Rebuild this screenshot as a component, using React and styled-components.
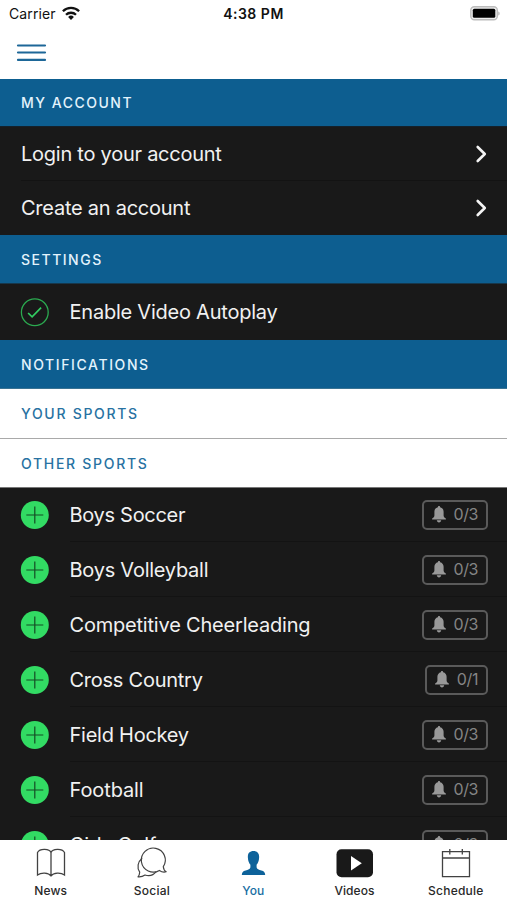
import React from "react";
import styled, { createGlobalStyle } from "styled-components";

const GlobalStyle = createGlobalStyle`
  * { box-sizing: border-box; }
  body { margin: 0; background: #fff; font-family: Inter, "Liberation Sans", sans-serif; }
`;

const Screen = styled.div`
  width: 507px;
  height: 900px;
  display: flex;
  flex-direction: column;
  overflow: hidden;
  background: #fff;
`;

const StatusBar = styled.header`
  height: 27px;
  flex: none;
  display: grid;
  grid-template-columns: 1fr auto 1fr;
  align-items: center;
  padding: 0 7px 0 9px;
  color: #111;
  font-size: 14px;
  line-height: 27px;
`;

const Carrier = styled.div`
  display: flex;
  align-items: center;
  gap: 6px;
  letter-spacing: 0.1px;
`;

const Clock = styled.div`
  font-weight: 600;
  letter-spacing: 0.5px;
  margin-right: 2px;
`;

const Battery = styled.svg`
  justify-self: end;
  display: block;
`;

const Toolbar = styled.nav`
  height: 52px;
  flex: none;
  padding: 17px;
`;

const MenuButton = styled.button`
  display: block;
  padding: 0;
  border: 0;
  background: none;
`;

const Content = styled.main`
  flex: 1;
  min-height: 0;
  overflow: hidden;
  background: #191919;
`;

const SectionTitle = styled.h2`
  margin: 0;
  height: ${(p) => p.$height}px;
  padding: 0 21px;
  display: flex;
  align-items: center;
  font-size: 14px;
  font-weight: 500;
  letter-spacing: ${(p) => p.$tracking}px;
  color: ${(p) => (p.$light ? "#2872a2" : "#e3f3fc")};
  background: ${(p) => (p.$light ? "#fff" : "#0d5e90")};
  border-bottom: 1px solid ${(p) => p.$line};
`;

const Row = styled.div`
  height: ${(p) => p.$height || 55}px;
  display: flex;
  align-items: center;
  padding-left: 21px;
`;

const SportRow = styled(Row)`
  padding-bottom: 1px;
  border-bottom: 0;
`;

const RowBody = styled.div`
  flex: 1;
  height: 100%;
  display: flex;
  align-items: center;
  justify-content: space-between;
  margin-left: ${(p) => (p.$indented ? 20.5 : 0)}px;
  padding-right: 19px;
  border-bottom: ${(p) => (p.$last ? "0" : "1px solid #131313")};
`;

const Label = styled.span`
  color: #f1f1f1;
  font-size: 20px;
  line-height: 24px;
  white-space: nowrap;
  letter-spacing: ${(p) => p.$tracking || 0}px;
`;

const Icon = styled.svg`
  display: block;
  flex: none;
  overflow: visible;
`;

const Badge = styled.span`
  height: 30px;
  width: ${(p) => p.$width}px;
  display: flex;
  align-items: center;
  justify-content: space-between;
  padding: 0 8px 1px;
  border: 2px solid #5a5a5a;
  border-radius: 5px;
  color: #858585;
  font-size: 16px;
  white-space: nowrap;
  letter-spacing: -0.4px;
`;

const TabBar = styled.nav`
  height: 60px;
  flex: none;
  display: grid;
  grid-template-columns: repeat(5, 101.3px);
  background: #fff;
`;

const Tab = styled.div`
  display: flex;
  flex-direction: column;
  align-items: center;
  padding-top: 7px;
  color: ${(p) => (p.$active ? "#176da2" : "#282828")};
`;

const TabLabel = styled.span`
  margin-top: 4px;
  font-size: 12px;
  line-height: 16px;
  font-weight: 500;
  letter-spacing: ${(p) => p.$tracking}px;
`;

const Chevron = () => (
  <Icon width="12" height="18" viewBox="0 0 12 18" fill="none" stroke="#f4f4f4" strokeWidth="2.6" strokeLinecap="round" strokeLinejoin="round">
    <path d="M1.700 2 8.800 9l-7.100 7" />
  </Icon>
);

const Plus = () => (
  <Icon width="28" height="28" viewBox="0 0 28 28">
    <circle cx="13.800" cy="14" r="14" fill="#32db63" />
    <path d="M5.300 14h17M13.800 5.500v17" stroke="#154c25" strokeWidth="1.200" />
  </Icon>
);

const Check = () => (
  <Icon width="28" height="28" viewBox="0 0 28 28" fill="none">
    <circle cx="13.800" cy="14.200" r="13.400" stroke="#2baa50" strokeWidth="1.300" />
    <path d="m7.100 15 4 3.800 9-9.100" stroke="#32cd61" strokeWidth="1.700" />
  </Icon>
);

const Bell = () => (
  <Icon width="15" height="17" viewBox="0 0 15 17" fill="#999">
    <path d="M7 0c.7 0 1.100.5 1.100 1.200 2.200.5 3.500 2.300 3.500 4.600v3.800c0 1.500 1 2.200 2.300 3v1H.1v-1c1.300-.8 2.300-1.500 2.300-3V5.800c0-2.300 1.300-4.100 3.500-4.600C5.900.5 6.300 0 7 0ZM4.800 14.200h4.400c-.2 1.400-1 2.200-2.200 2.200s-2-.8-2.200-2.200Z" />
  </Icon>
);

const tabIcons = {
  News: (
    <Icon width="30" height="32" viewBox="0 0 30 32" fill="none" stroke="#424242" strokeWidth="1.300">
      <path d="M15 5.500C13.500 1.700 4 1 1.500 5.500V28C5 25.300 12.500 25.300 15 28.900 17.500 25.300 25 25.300 28.500 28V5.500C26 1 16.500 1.700 15 5.500v23.400" />
    </Icon>
  ),
  Social: (
    <Icon width="32" height="32" viewBox="0 0 32 32" fill="none" stroke="#424242" strokeWidth="1.200" strokeLinejoin="round">
      <path d="M27.300 19.700A12 12 0 1 0 23.400 23.400c2.100 1.500 4.500 2 6.800 1.300-2-.9-2.600-2.500-2.900-5Z" />
      <path d="M6.200 11.200c-4.500 3.500-5.500 9.400-2.500 14-.1 2-.7 3.400-1.700 4.600 2.700.3 5-.4 7-1.800 4.300 1.300 8.700-.1 11.100-3.400" />
    </Icon>
  ),
  You: (
    <Icon width="24" height="32" viewBox="0 0 24 32" fill="#0d629a">
      <path d="M12.500 4c-4.200 0-6 2.700-5.600 6.700.1 3.100 1.100 5.400 2.500 7v2.600c-.2 2-2.300 2.500-4.800 3.200C2 24.200 1 25 .8 28h23.400c-.2-3-1.200-3.800-3.800-4.500-2.500-.7-4.600-1.200-4.800-3.200v-2.600c1.400-1.600 2.400-3.900 2.500-7C18.500 6.700 16.700 4 12.500 4Z" />
    </Icon>
  ),
  Videos: (
    <Icon width="37" height="32" viewBox="0 0 37 32">
      <rect x=".5" y="2.200" width="36.500" height="28" rx="5" fill="#191919" />
      <path d="M15 9v14.400L25.800 16.200Z" fill="#fff" />
    </Icon>
  ),
  Schedule: (
    <Icon width="30" height="32" viewBox="0 0 30 32" fill="none" stroke="#424242" strokeWidth="1.300">
      <path d="M1.500 4.700h27v25h-27ZM1.500 11h27M8.800 2v5.500M21.300 2v5.500" />
    </Icon>
  ),
};

const tabs = [
  { name: "News", tracking: 0.15 },
  { name: "Social", tracking: 0.25 },
  { name: "You", tracking: 0 },
  { name: "Videos", tracking: 0.1 },
  { name: "Schedule", tracking: 0.25 },
];

const sports = [
  { name: "Boys Soccer", count: "0/3", tracking: -0.3 },
  { name: "Boys Volleyball", count: "0/3", tracking: -0.25 },
  { name: "Competitive Cheerleading", count: "0/3", tracking: -0.2 },
  { name: "Cross Country", count: "0/1", tracking: -0.25 },
  { name: "Field Hockey", count: "0/3", tracking: -0.25 },
  { name: "Football", count: "0/3", tracking: -0.1 },
  { name: "Girls Golf", count: "0/3", tracking: -0.1 },
];

export default function App() {
  return (
    <>
      <GlobalStyle />
      <Screen>
        <StatusBar>
          <Carrier>
            Carrier
            <Icon width="18" height="14" viewBox="0 0 18 14" fill="none" stroke="#111" strokeWidth="2.300">
              <path d="M.9 4.200a11.500 11.500 0 0 1 16.200 0M4 7.800a7.100 7.100 0 0 1 10 0" />
              <path d="M6.100 10a4.200 4.200 0 0 1 5.800 0L9 13Z" fill="#111" stroke="none" />
            </Icon>
          </Carrier>
          <Clock>4:38 PM</Clock>
          <Battery width="30" height="15" viewBox="0 0 30 15">
            <rect x=".8" y=".8" width="26.500" height="13" rx="3.500" fill="#eee" stroke="#bcbcbc" strokeWidth="1.400" />
            <rect x="2.800" y="2.800" width="22.500" height="9" rx="1.500" fill="#000" />
            <path d="M28.200 5.500c2 .6 2 3.400 0 4Z" fill="#bcbcbc" />
          </Battery>
        </StatusBar>
        <Toolbar>
          <MenuButton aria-label="Menu">
            <Icon width="29" height="18" viewBox="0 0 29 18" stroke="#1d6798" strokeWidth="2.200" strokeLinecap="round">
              <path d="M1 1.500h27M1 8.500h27M1 15.900h27" />
            </Icon>
          </MenuButton>
        </Toolbar>
        <Content>
          <SectionTitle $height={48} $tracking={1.5} $line="#14202a">MY ACCOUNT</SectionTitle>
          <Row $height={54}>
            <RowBody>
              <Label $tracking={-0.25}>Login to your account</Label>
              <Chevron />
            </RowBody>
          </Row>
          <Row $height={54}>
            <RowBody $last>
              <Label $tracking={-0.25}>Create an account</Label>
              <Chevron />
            </RowBody>
          </Row>
          <SectionTitle $height={49} $tracking={1.5} $line="#17374b">SETTINGS</SectionTitle>
          <Row $height={56}>
            <Check />
            <RowBody $indented $last>
              <Label $tracking={-0.23}>Enable Video Autoplay</Label>
            </RowBody>
          </Row>
          <SectionTitle $height={49} $tracking={1.6} $line="#397393">NOTIFICATIONS</SectionTitle>
          <SectionTitle $light $height={50} $tracking={1.7} $line="#a9a9a9">YOUR SPORTS</SectionTitle>
          <SectionTitle $light $height={49} $tracking={1.7} $line="#777">OTHER SPORTS</SectionTitle>
          {sports.map((s) => (
            <SportRow key={s.name}>
              <Plus />
              <RowBody $indented>
                <Label $tracking={s.tracking}>{s.name}</Label>
                <Badge $width={s.count === "0/1" ? 63 : 66}>
                  <Bell />
                  {s.count}
                </Badge>
              </RowBody>
            </SportRow>
          ))}
        </Content>
        <TabBar>
          {tabs.map((t) => (
            <Tab key={t.name} $active={t.name === "You"}>
              {tabIcons[t.name]}
              <TabLabel $tracking={t.tracking}>{t.name}</TabLabel>
            </Tab>
          ))}
        </TabBar>
      </Screen>
    </>
  );
}
